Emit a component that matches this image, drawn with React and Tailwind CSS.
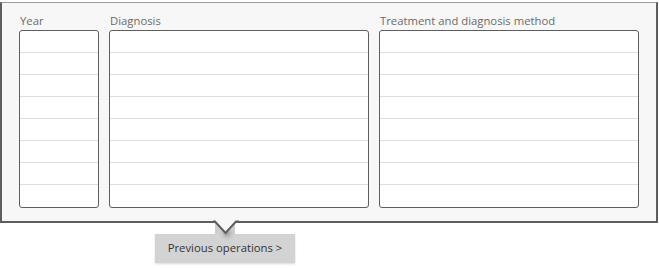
import React from 'react'

const font = { fontFamily: '"Segoe UI", "Open Sans", "Noto Sans", sans-serif' }

function Column({ label, width }) {
  const rows = [0, 1, 2, 3, 4, 5, 6, 7]
  return (
    <div className={`flex flex-col ${width}`}>
      <div className="h-[16px] mb-[1px] pl-[1px] text-[11.3px] leading-[16px] text-[#6b6b6b]">{label}</div>
      <div className="border border-[#5e5e5e] rounded-[3px] bg-white overflow-hidden">
        {rows.map(r => (
          <div key={r} className={`h-[22px] ${r < 7 ? 'border-b border-[#dedede]' : 'h-[21px]'}`} />
        ))}
      </div>
    </div>
  )
}

export default function App() {
  return (
    <div className="w-[659px] h-[268px] bg-white relative" style={font}>
      <div className="pt-[2px] w-[658px]">
        <div className="border-t border-[#9a9a9a] border-x-2 border-b-2 border-x-[#5e5e5e] border-b-[#5e5e5e] bg-[#f7f7f7] pt-[10px] pb-[13px] pl-[17px] pr-[17px] flex gap-[10px]">
          <Column label="Year" width="w-[80px]" />
          <Column label="Diagnosis" width="w-[260px]" />
          <Column label="Treatment and diagnosis method" width="w-[260px]" />
        </div>
      </div>

      <div className="ml-[155px] mt-[11px] relative w-[140px]">
        <button className="w-[140px] h-[29px] bg-[#d3d3d3] text-[#333] text-[11.3px] shadow-[0_1px_2px_rgba(0,0,0,0.15)]">
          Previous operations &gt;
        </button>
      </div>

      {/* pointer notch */}
      <svg className="absolute left-[213px] top-[219px]" width="26" height="30" viewBox="0 0 26 30">
        <defs>
          <radialGradient id="sh" cx="0.5" cy="0.3" r="0.5">
            <stop offset="0" stopColor="#8a8a8a" stopOpacity="0.8" />
            <stop offset="1" stopColor="#d3d3d3" stopOpacity="0" />
          </radialGradient>
        </defs>
        <rect x="2" y="2" width="20" height="13" fill="#cfcfcf" />
        <ellipse cx="14" cy="18" rx="9" ry="9" fill="url(#sh)" />
        <polygon points="2,0 24,0 24,2 13,14 2,2" fill="#f7f7f7" />
        <polyline points="0,2.5 2,2.5 12.5,14 23,2.5 26,2.5" fill="none" stroke="#5e5e5e" strokeWidth="2" />
      </svg>
    </div>
  )
}
